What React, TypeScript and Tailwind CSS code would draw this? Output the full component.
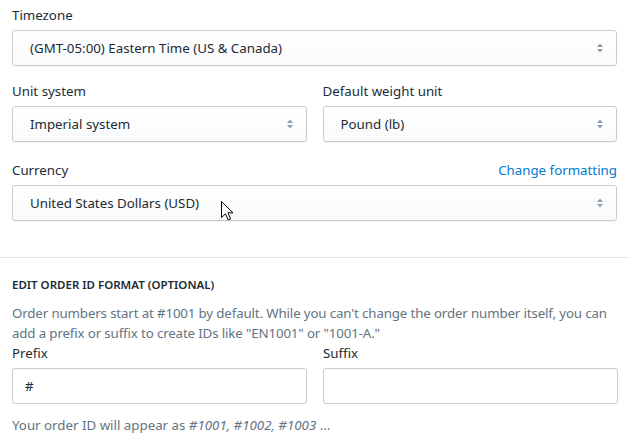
function Chevron() {
  return (
    <svg width="8" height="12" viewBox="0 0 8 12" className="text-[#919eab]">
      <path d="M4 1.5 L7 5 H1 Z" fill="currentColor" />
      <path d="M4 10.5 L7 7 H1 Z" fill="currentColor" />
    </svg>
  );
}

function Cursor() {
  return (
    <svg width="13" height="20" viewBox="0 0 13 20" className="absolute left-[209px] top-[41px]">
      <path
        d="M0.5 0.5 L0.5 16.5 L4.5 12.8 L7.2 19 L9.6 18 L7 11.8 L12 11.8 Z"
        fill="white"
        stroke="black"
        strokeWidth="1"
        strokeLinejoin="round"
      />
    </svg>
  );
}

function Select({ value }: { value: string }) {
  return (
    <div className="flex h-9 items-center justify-between rounded-[3px] border border-[#c4cdd5] bg-gradient-to-b from-white to-[#f9fafb] pl-[17px] pr-[12px] shadow-[0_1px_0_rgba(22,29,37,0.05)]">
      <span className="text-[#212b36]">{value}</span>
      <Chevron />
    </div>
  );
}

function Field({ label, value, extra }: { label: string; value: string; extra?: React.ReactNode }) {
  return (
    <div className="flex flex-col">
      <div className="mb-[5px] flex h-5 items-center justify-between">
        <span className="text-[#212b36]">{label}</span>
        {extra}
      </div>
      <Select value={value} />
    </div>
  );
}

function Input({ value }: { value?: string }) {
  return (
    <div className="flex h-9 items-center rounded-[3px] border border-[#c4cdd5] bg-white px-3 text-[#212b36]">
      {value}
    </div>
  );
}

export default function App() {
  return (
    <div className="h-[441px] w-[630px] overflow-hidden bg-white text-[13.3px] leading-5 font-['Noto_Sans',sans-serif]">
      <div className="flex flex-col pl-[12px] pr-[13px] pt-[5px]">
        <Field label="Timezone" value="(GMT-05:00) Eastern Time (US & Canada)" />
        <div className="mt-[15px] grid grid-cols-2 gap-4">
          <Field label="Unit system" value="Imperial system" />
          <Field label="Default weight unit" value="Pound (lb)" />
        </div>
        <div className="relative mt-[18px]">
          <Field
            label="Currency"
            value="United States Dollars (USD)"
            extra={<span className="text-[#007ace]">Change formatting</span>}
          />
          <Cursor />
        </div>
      </div>

      <div className="mt-[36px] border-t border-[#e6e9ec]" />

      <div className="flex flex-col px-[12px] pt-[19px]">
        <div className="text-[11.5px] font-semibold uppercase leading-4 text-[#212b36]">
          Edit order ID format (optional)
        </div>
        <p className="mt-[10px] tracking-[-0.14px] text-[#637381]">
          Order numbers start at #1001 by default. While you can't change the order number itself, you can add a
          prefix or suffix to create IDs like "EN1001" or "1001-A."
        </p>
        <div className="grid grid-cols-2 gap-4">
          <div className="flex flex-col">
            <span className="mb-[5px] text-[#212b36]">Prefix</span>
            <Input value="#" />
          </div>
          <div className="flex flex-col">
            <span className="mb-[5px] text-[#212b36]">Suffix</span>
            <Input />
          </div>
        </div>
        <p className="mt-[11px] text-[#637381]">
          Your order ID will appear as <em>#1001, #1002, #1003</em> ...
        </p>
      </div>
    </div>
  );
}
